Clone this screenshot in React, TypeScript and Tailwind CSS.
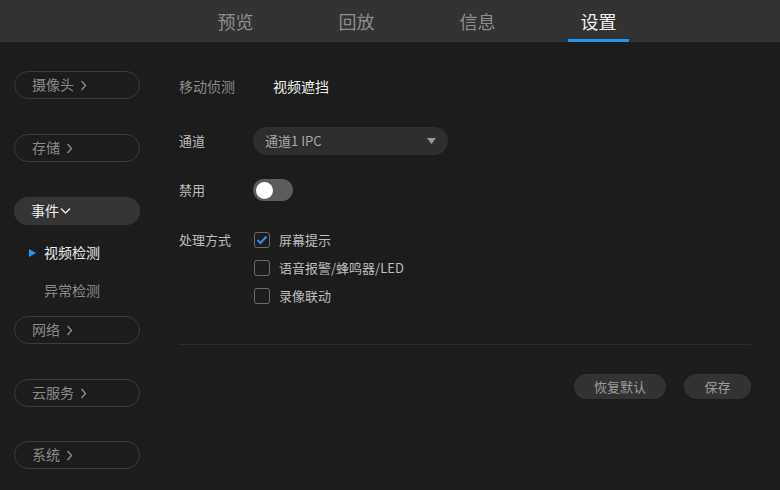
import React from "react";

const font = { fontFamily: '"Noto Sans CJK SC", "Noto Sans", sans-serif' };

function Chevron({ down = false }: { down?: boolean }) {
  return down ? (
    <svg width="11" height="8" viewBox="0 0 11 8" className="ml-[1px]">
      <path d="M1 1.5 L5.5 6 L10 1.5" fill="none" stroke="#e6e6e6" strokeWidth="1.5" />
    </svg>
  ) : (
    <svg width="7" height="11" viewBox="0 0 7 11" className="ml-[6px]">
      <path d="M1.5 1 L5.5 5.5 L1.5 10" fill="none" stroke="#8a8a8a" strokeWidth="1.4" />
    </svg>
  );
}

function Pill({ label, mt }: { label: string; mt: string }) {
  return (
    <div
      className={`ml-[14px] ${mt} flex h-[28px] w-[126px] items-center rounded-full border border-[#3a3a3a] pl-[17px] text-[14px] text-[#8a8a8a]`}
    >
      <span className="-mt-[1px]">{label}</span>
      <Chevron />
    </div>
  );
}

function Checkbox({ checked, label }: { checked?: boolean; label: string }) {
  return (
    <div className="flex h-[28px] items-center">
      <div className="flex h-[16px] w-[16px] items-center justify-center rounded-[3px] border border-[#6a6a6a]">
        {checked && (
          <svg width="12" height="10" viewBox="0 0 12 10">
            <path d="M1.5 5 L4.5 8 L10.5 1.5" fill="none" stroke="#2a8ff0" strokeWidth="2.2" />
          </svg>
        )}
      </div>
      <span className="ml-[9px] text-[13px] text-[#bdbdbd]">{label}</span>
    </div>
  );
}

export default function App() {
  const tabs = ["预览", "回放", "信息", "设置"];
  return (
    <div className="flex h-[490px] w-[780px] flex-col overflow-hidden bg-[#1c1c1c]" style={font}>
      <div className="flex h-[42px] bg-[#333333] pl-[175px]">
        {tabs.map((t, i) => (
          <div key={t} className="relative flex w-[121px] items-center justify-center">
            <span className={`text-[18px] ${i === 3 ? "text-[#f0f0f0]" : "text-[#8c8c8c]"}`}>{t}</span>
            {i === 3 && <div className="absolute bottom-0 left-[30px] h-[3px] w-[61px] bg-[#2196f3]" />}
          </div>
        ))}
      </div>
      <div className="flex flex-1">
        <div className="flex w-[160px] flex-col">
          <Pill label="摄像头" mt="mt-[29px]" />
          <Pill label="存储" mt="mt-[35px]" />
          <div className="ml-[14px] mt-[35px] flex h-[28px] w-[126px] items-center rounded-full bg-[#353535] pl-[17px] text-[14px] text-[#eeeeee]">
            <span className="-mt-[1px]">事件</span>
            <Chevron down />
          </div>
          <div className="mt-[9px] flex h-[38px] items-center pl-[29px]">
            <svg width="7" height="8" viewBox="0 0 7 8">
              <path d="M0 0 L7 4 L0 8 Z" fill="#2196f3" />
            </svg>
            <span className="-mt-[1px] ml-[8px] text-[14px] text-[#eeeeee]">视频检测</span>
          </div>
          <div className="flex h-[38px] items-center pl-[44px]">
            <span className="-mt-[1px] text-[14px] text-[#8a8a8a]">异常检测</span>
          </div>
          <Pill label="网络" mt="mt-[6px]" />
          <Pill label="云服务" mt="mt-[35px]" />
          <Pill label="系统" mt="mt-[34px]" />
        </div>
        <div className="flex flex-1 flex-col pl-[19px] pr-[29px]">
          <div className="mt-[30px] flex h-[28px] items-center text-[14px]">
            <span className="w-[94px] text-[#8a8a8a]">移动侦测</span>
            <span className="text-[#f0f0f0]">视频遮挡</span>
          </div>
          <div className="mt-[27px] flex h-[28px] items-center">
            <span className="w-[74px] text-[13px] text-[#bdbdbd]">通道</span>
            <div className="flex h-[28px] w-[195px] items-center justify-between rounded-full bg-[#2e2e2e] pl-[12px] pr-[12px]">
              <span className="text-[13px] text-[#a8a8a8]">通道1 IPC</span>
              <svg width="9" height="7" viewBox="0 0 9 7">
                <path d="M0 0 L9 0 L4.5 6 Z" fill="#9a9a9a" />
              </svg>
            </div>
          </div>
          <div className="mt-[24px] flex h-[22px] items-center">
            <span className="w-[74px] text-[13px] text-[#bdbdbd]">禁用</span>
            <div className="flex h-[22px] w-[40px] items-center rounded-full bg-[#5c5c5c] pl-[3px]">
              <div className="h-[17px] w-[17px] rounded-full bg-white" />
            </div>
          </div>
          <div className="mt-[25px] flex">
            <span className="flex h-[28px] w-[75px] items-center text-[13px] text-[#bdbdbd]">处理方式</span>
            <div className="flex flex-col">
              <Checkbox checked label="屏幕提示" />
              <Checkbox label="语音报警/蜂鸣器/LED" />
              <Checkbox label="录像联动" />
            </div>
          </div>
          <div className="mt-[34px] h-px bg-[#2c2c2c]" />
          <div className="mt-[29px] flex justify-end gap-[18px]">
            <div className="flex h-[25px] w-[92px] items-center justify-center rounded-full bg-[#333333] text-[13px] text-[#9a9a9a]">
              恢复默认
            </div>
            <div className="flex h-[25px] w-[67px] items-center justify-center rounded-full bg-[#333333] text-[13px] text-[#9a9a9a]">
              保存
            </div>
          </div>
        </div>
      </div>
    </div>
  );
}
